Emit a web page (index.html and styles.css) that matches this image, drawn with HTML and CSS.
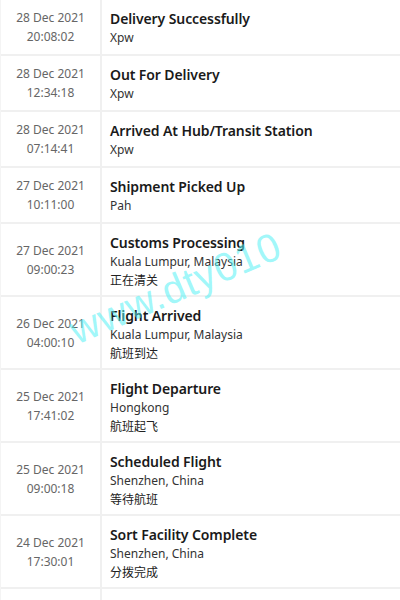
FILE: index.html
```html
<!DOCTYPE html>
<html>
<head>
<meta charset="utf-8">
<link rel="stylesheet" href="styles.css">
</head>
<body>
<div class="list">
  <div class="row"><div class="when"><span>28 Dec 2021</span><span>20:08:02</span></div><div class="what"><div class="title">Delivery Successfully</div><div class="sub">Xpw</div></div></div>
  <div class="row"><div class="when"><span>28 Dec 2021</span><span>12:34:18</span></div><div class="what"><div class="title">Out For Delivery</div><div class="sub">Xpw</div></div></div>
  <div class="row"><div class="when"><span>28 Dec 2021</span><span>07:14:41</span></div><div class="what"><div class="title">Arrived At Hub/Transit Station</div><div class="sub">Xpw</div></div></div>
  <div class="row"><div class="when"><span>27 Dec 2021</span><span>10:11:00</span></div><div class="what"><div class="title">Shipment Picked Up</div><div class="sub">Pah</div></div></div>
  <div class="row"><div class="when"><span>27 Dec 2021</span><span>09:00:23</span></div><div class="what"><div class="title">Customs Processing</div><div class="sub">Kuala Lumpur, Malaysia</div><div class="cn">正在清关</div></div></div>
  <div class="row"><div class="when"><span>26 Dec 2021</span><span>04:00:10</span></div><div class="what"><div class="title">Flight Arrived</div><div class="sub">Kuala Lumpur, Malaysia</div><div class="cn">航班到达</div></div></div>
  <div class="row"><div class="when"><span>25 Dec 2021</span><span>17:41:02</span></div><div class="what"><div class="title">Flight Departure</div><div class="sub">Hongkong</div><div class="cn">航班起飞</div></div></div>
  <div class="row"><div class="when"><span>25 Dec 2021</span><span>09:00:18</span></div><div class="what"><div class="title">Scheduled Flight</div><div class="sub">Shenzhen, China</div><div class="cn">等待航班</div></div></div>
  <div class="row"><div class="when"><span>24 Dec 2021</span><span>17:30:01</span></div><div class="what"><div class="title">Sort Facility Complete</div><div class="sub">Shenzhen, China</div><div class="cn">分拨完成</div></div></div>
  <div class="row row-empty"><div class="when"></div><div class="what"></div></div>
</div>
<div class="watermark">www.dty010</div>
</body>
</html>
```
FILE: styles.css
```css
html, body {
  margin: 0;
  padding: 0;
  background: #fff;
  overflow: hidden;
  height: 600px;
}
body {
  font-family: "Noto Sans", "Noto Sans CJK SC", sans-serif;
  color: #1a1a1a;
  position: relative;
}
.list {
  display: flex;
  flex-direction: column;
  border-left: 1px solid #f4f4f4;
}
.row {
  display: flex;
  border-bottom: 2px solid #f0f0f0;
}
.row-empty {
  height: 40px;
}
.when {
  width: 99px;
  flex: none;
  border-right: 2px solid #f0f0f0;
  display: flex;
  flex-direction: column;
  justify-content: center;
  align-items: center;
  font-size: 12px;
  line-height: 19px;
  color: #666;
}
.what {
  flex: 1;
  padding: 9px 8px 7px 8px;
}
.title {
  font-size: 14px;
  font-weight: 600;
  line-height: 20px;
  color: #1a1a1a;
  letter-spacing: -0.1px;
}
.sub {
  font-size: 12px;
  line-height: 18px;
  color: #333;
}
.cn {
  font-family: "Noto Sans CJK SC", sans-serif;
  font-size: 12px;
  line-height: 17px;
  color: #222;
}
.watermark {
  position: absolute;
  left: 80px;
  top: 308px;
  font-family: "Liberation Sans", sans-serif;
  font-size: 40px;
  line-height: 44px;
  color: rgba(80, 240, 245, 0.55);
  transform: rotate(-23deg);
  transform-origin: 0 100%;
  letter-spacing: 1px;
  white-space: nowrap;
}
```
